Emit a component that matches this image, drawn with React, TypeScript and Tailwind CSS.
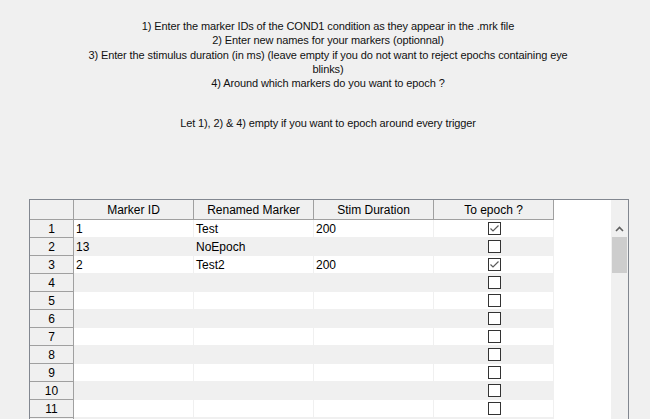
const INSTRUCTIONS = [
  '1) Enter the marker IDs of the COND1 condition as they appear in the .mrk file',
  '2) Enter new names for your markers (optionnal)',
  '3) Enter the stimulus duration (in ms) (leave empty if you do not want to reject epochs containing eye',
  'blinks)',
  '4) Around which markers do you want to epoch ?',
];

const COLUMNS = ['Marker ID', 'Renamed Marker', 'Stim Duration', 'To epoch ?'];

type Row = { id: string; name: string; duration: string; epoch: boolean };

const ROWS: Row[] = [
  { id: '1', name: 'Test', duration: '200', epoch: true },
  { id: '13', name: 'NoEpoch', duration: '', epoch: false },
  { id: '2', name: 'Test2', duration: '200', epoch: true },
  ...Array.from({ length: 9 }, () => ({ id: '', name: '', duration: '', epoch: false })),
];

// rows past the 11th sit below the window edge, so their number is not drawn
const VISIBLE_LABELS = 11;

const CheckBox = ({ checked }: { checked: boolean }) => (
  <div className="flex h-[13px] w-[13px] items-center justify-center border border-[#333333] bg-white">
    {checked && (
      <svg width="11" height="11" viewBox="0 0 11 11">
        <polyline
          points="1.5,5.5 4,8 9.5,2.5"
          fill="none"
          stroke="#5a5a5a"
          strokeWidth="1.2"
        />
      </svg>
    )}
  </div>
);

export default function App() {
  return (
    <div className="h-[419px] w-[650px] overflow-hidden bg-[#f0f0f0] font-['Liberation_Sans',Arial,sans-serif] text-black">
      <div className="h-[199px] pl-[6px] pt-[19px] text-center text-[11px] leading-[14.3px] tracking-[-0.01em] text-[#111]">
        {INSTRUCTIONS.map((line) => (
          <div key={line}>{line}</div>
        ))}
        <div className="mt-[26px]">Let 1), 2) &amp; 4) empty if you want to epoch around every trigger</div>
      </div>

      <div className="ml-[29px] flex w-[600px] border-x border-t border-[#828790]">
        <div className="flex w-[581px] flex-col bg-white text-[12px]">
          <div className="flex h-[20px]">
            <div className="w-[44px] shrink-0 border-r border-b border-[#a0a0a0] bg-[#f0f0f0]" />
            {COLUMNS.map((col) => (
              <div
                key={col}
                className="flex w-[120px] shrink-0 items-center justify-center border-r border-b border-[#a0a0a0] bg-[#f0f0f0] pt-px"
              >
                {col}
              </div>
            ))}
            <div className="flex-1 bg-white" />
          </div>

          {ROWS.map((row, i) => {
            const bg = i % 2 === 0 ? 'bg-white' : 'bg-[#f0f0f0]';
            return (
              <div key={i} className="flex h-[18px] shrink-0">
                <div className="flex w-[44px] shrink-0 items-center justify-center border-r border-b border-[#a0a0a0] bg-[#f0f0f0]">
                  {i < VISIBLE_LABELS ? i + 1 : ''}
                </div>
                {[row.id, row.name, row.duration].map((value, j) => (
                  <div
                    key={j}
                    className={`flex w-[120px] shrink-0 items-center border-r border-b border-[#f0f0f0] pl-[2px] ${bg}`}
                  >
                    {value}
                  </div>
                ))}
                <div
                  className={`flex w-[120px] shrink-0 items-center justify-center border-r border-b border-[#f0f0f0] pl-px ${bg}`}
                >
                  <CheckBox checked={row.epoch} />
                </div>
                <div className="flex-1 bg-white" />
              </div>
            );
          })}
        </div>

        <div className="flex w-[17px] shrink-0 flex-col bg-[#f0f0f0]">
          <div className="h-[20px]" />
          <div className="flex h-[17px] items-center justify-center">
            <svg width="9" height="6" viewBox="0 0 9 6">
              <polyline points="1,5 4.5,1.5 8,5" fill="none" stroke="#606060" strokeWidth="1.6" />
            </svg>
          </div>
          <div className="mx-px h-[36px] bg-[#cdcdcd]" />
        </div>
      </div>
    </div>
  );
}
